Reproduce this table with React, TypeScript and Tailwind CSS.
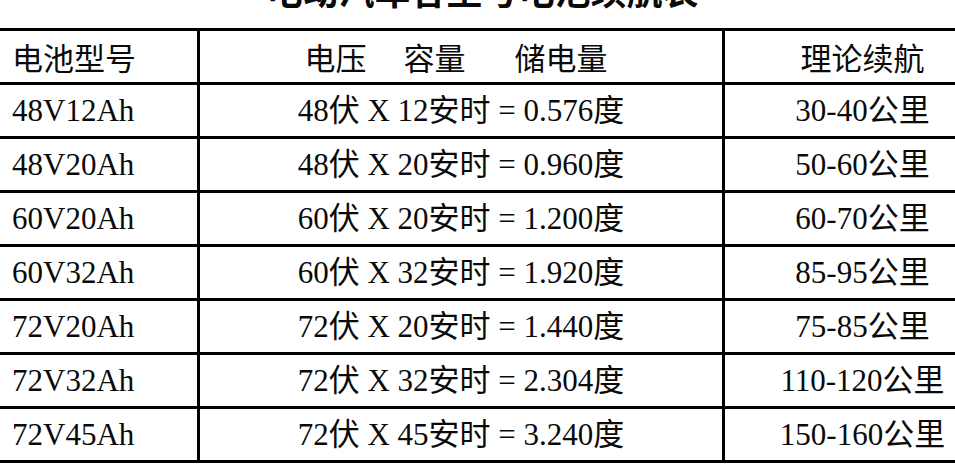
const rows = [
  { model: "48V12Ah", v: "48", ah: "12", kwh: "0.576", range: "30-40" },
  { model: "48V20Ah", v: "48", ah: "20", kwh: "0.960", range: "50-60" },
  { model: "60V20Ah", v: "60", ah: "20", kwh: "1.200", range: "60-70" },
  { model: "60V32Ah", v: "60", ah: "32", kwh: "1.920", range: "85-95" },
  { model: "72V20Ah", v: "72", ah: "20", kwh: "1.440", range: "75-85" },
  { model: "72V32Ah", v: "72", ah: "32", kwh: "2.304", range: "110-120" },
  { model: "72V45Ah", v: "72", ah: "45", kwh: "3.240", range: "150-160" },
];

const serif = "font-['Liberation_Serif','Noto_Sans_CJK_SC',serif]";
const sans = "font-['Noto_Sans_CJK_SC','Noto_Sans',sans-serif]";

export default function App() {
  return (
    <div className="h-[472px] w-[955px] overflow-hidden bg-white text-[#0a0a0a]">
      {/* title, mostly cut off by the crop */}
      <div className="flex h-[28px] items-end justify-center overflow-hidden pl-[10px]">
        <div className={`${sans} mb-[21px] text-[36px] font-bold leading-none`}>
          电动汽车各型号电池续航表
        </div>
      </div>

      {/* table */}
      <div className="w-[1000px] border-t-[3px] border-black">
        <div className={`${sans} flex h-[54px] border-b-[3px] border-black text-[31px] leading-none`}>
          <div className="flex w-[200px] items-center border-r-[3px] border-black pl-[12px]">
            电池型号
          </div>
          <div className="flex w-[525px] items-center justify-center border-r-[3px] border-black pr-[10px]">
            <span>电压</span>
            <span className="ml-[37px]">容量</span>
            <span className="ml-[49px]">储电量</span>
          </div>
          <div className="flex flex-1 items-center justify-center">理论续航</div>
        </div>

        {rows.map((r) => (
          <div
            key={r.model}
            className={`${serif} flex h-[54px] border-b-[3px] border-black text-[31px] leading-none`}
          >
            <div className="flex w-[200px] items-center border-r-[3px] border-black pl-[12px]">
              {r.model}
            </div>
            <div className="flex w-[525px] items-center justify-center whitespace-pre border-r-[3px] border-black">
              {`${r.v}伏 X ${r.ah}安时 = ${r.kwh}度`}
            </div>
            <div className="flex flex-1 items-center justify-center">{r.range}公里</div>
          </div>
        ))}
      </div>
    </div>
  );
}
